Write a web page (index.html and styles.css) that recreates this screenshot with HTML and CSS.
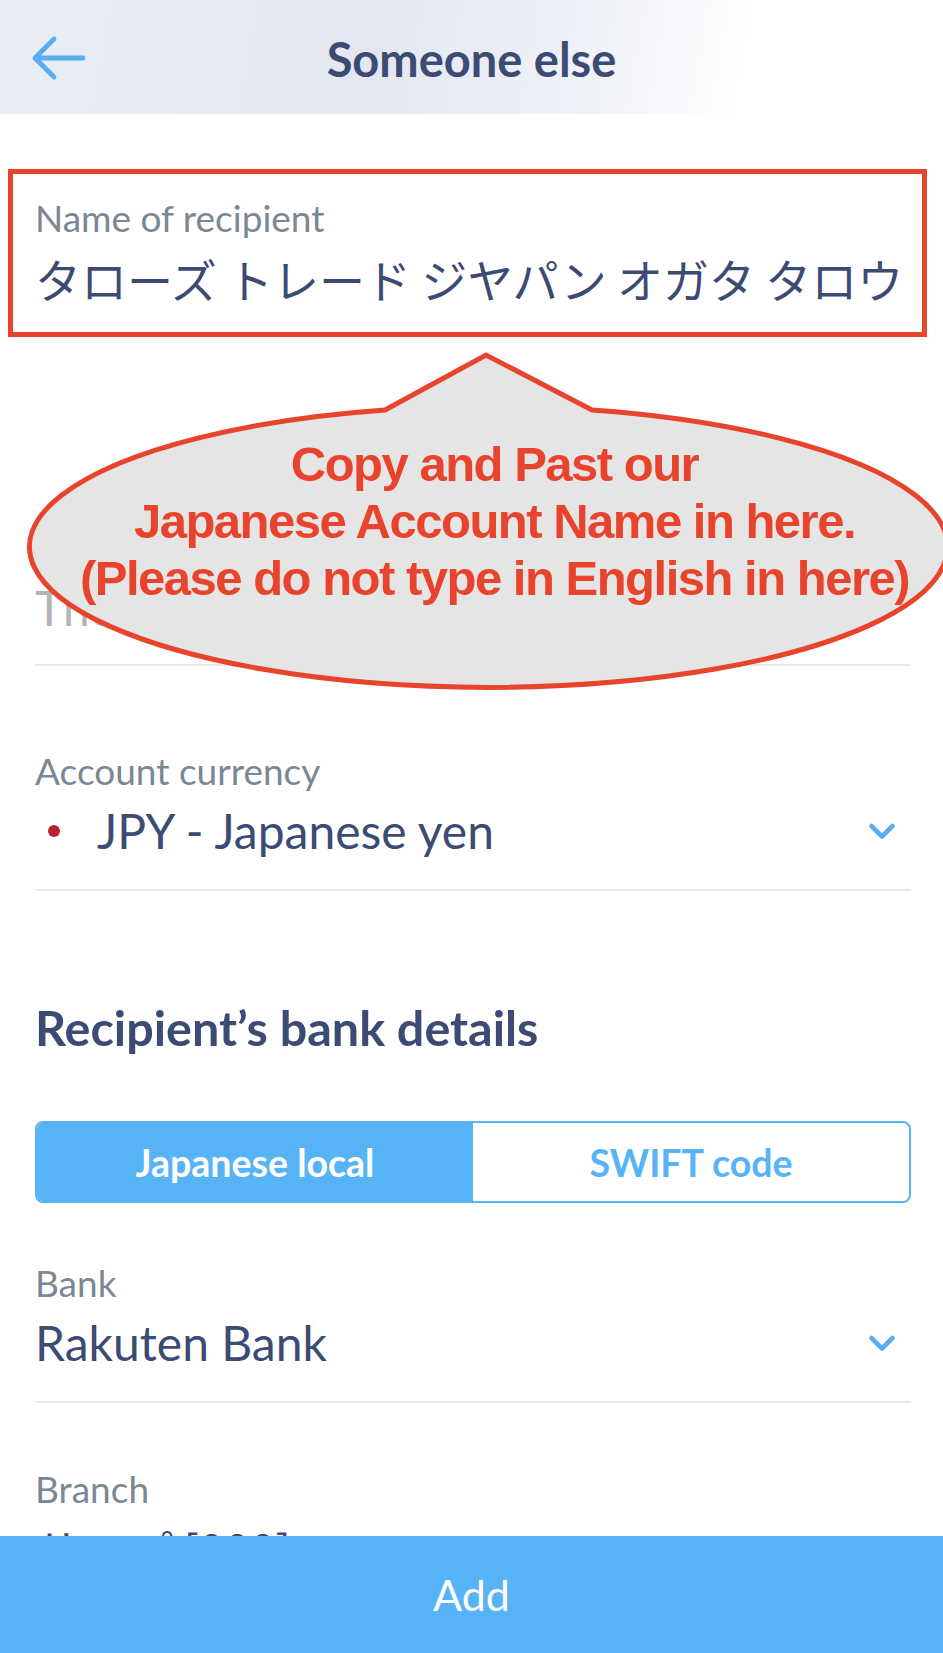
FILE: index.html
```html
<!DOCTYPE html>
<html lang="en">
  <head>
    <meta charset="UTF-8" />
    <meta name="viewport" content="width=device-width, initial-scale=1.0" />
    <title>Someone else</title>
    <link rel="stylesheet" href="styles.css">
  </head>
  <body>
    <div class="screen">
      <header class="topbar">
        <a href="#" class="back">
          <svg width="56" height="46" viewBox="0 0 56 46">
            <path d="M52 23 H4 M23 4 L4 23 L23 42" fill="none" stroke="#5aaef0" stroke-width="4.8" stroke-linecap="round" stroke-linejoin="round" />
          </svg>
        </a>
        <h1>Someone else</h1>
      </header>

      <main class="form">
        <div class="field field-marked">
          <div class="field-label">Name of recipient</div>
          <div class="field-value jp">タローズ トレード ジヤパン オガタ タロウ</div>
        </div>

        <div class="field field-hidden">
          <div class="field-label">Nickname (optional)</div>
          <div class="field-value placeholder">The name you will see</div>
        </div>

        <div class="field field-currency">
          <div class="field-label">Account currency</div>
          <div class="field-value">
            <span class="dot"></span>
            <span class="grow">JPY - Japanese yen</span>
            <svg class="chevron" width="28" height="19" viewBox="0 0 28 19">
              <path d="M3.5 4 L14 14.5 L24.5 4" fill="none" stroke="#5aaef0" stroke-width="4.6" stroke-linecap="round" stroke-linejoin="round" />
            </svg>
          </div>
        </div>

        <h2 class="section-title">Recipient’s bank details</h2>

        <div class="tabs">
          <span class="tab active">Japanese local</span>
          <span class="tab">SWIFT code</span>
        </div>

        <div class="field field-bank">
          <div class="field-label">Bank</div>
          <div class="field-value">
            <span class="grow">Rakuten Bank</span>
            <svg class="chevron" width="28" height="19" viewBox="0 0 28 19">
              <path d="M3.5 4 L14 14.5 L24.5 4" fill="none" stroke="#5aaef0" stroke-width="4.6" stroke-linecap="round" stroke-linejoin="round" />
            </svg>
          </div>
        </div>

        <div class="field field-branch">
          <div class="field-label">Branch</div>
          <div class="field-value jp">サップ [000]</div>
        </div>
      </main>

      <button class="add-btn">Add</button>

      <!-- annotation bubble over the form -->
      <div class="callout">
        <svg class="callout-shape" width="943" height="360" viewBox="0 0 943 360">
          <path d="M385 70 L486 15 L592 70 A459 140.5 0 1 1 385 70 Z" fill="#e5e5e5" stroke="#e8432c" stroke-width="5" stroke-linejoin="miter" />
        </svg>
        <div class="callout-text">
          Copy and Past our<br>
          Japanese Account Name in here.<br>
          (Please do not type in English in here)
        </div>
      </div>
    </div>
  </body>
</html>
```

FILE: styles.css
```css
body {
  margin: 0;
  padding: 0;
  font-family: Lato, "Noto Sans CJK JP", sans-serif;
  background: #fff;
}
.screen {
  position: relative;
  width: 943px;
  height: 1653px;
  display: flex;
  flex-direction: column;
  overflow: hidden;
  background: #fff;
}
.topbar {
  flex: none;
  height: 114px;
  display: grid;
  grid-template-columns: 1fr auto 1fr;
  align-items: center;
  background: linear-gradient(100deg, #e9edf5 0%, #e2e7f1 40%, #f2f4f9 66%, #ffffff 78%);
}
.back {
  display: flex;
  padding-left: 31px;
  padding-top: 2px;
}
.topbar h1 {
  margin: 0;
  padding-top: 4px;
  font-size: 47px;
  font-weight: 700;
  color: #3c4b73;
}
.form {
  flex: 1;
  overflow: hidden;
  padding: 0 32px 0 35px;
}
.field {
  border-bottom: 2px solid #e6e7ec;
  padding-bottom: 20px;
}
.field-label {
  font-size: 37px;
  line-height: 44px;
  color: #7b8794;
}
.field-value {
  display: flex;
  align-items: center;
  font-size: 48px;
  line-height: 76px;
  color: #3c4b73;
  white-space: nowrap;
}
.field-value.jp {
  font-family: "Noto Sans CJK JP", sans-serif;
  font-size: 46px;
}
.field-value.placeholder {
  color: #b4b4b4;
}
.grow {
  flex: 1;
}
.chevron {
  margin-right: 15px;
}
.dot {
  width: 12px;
  height: 12px;
  border-radius: 50%;
  background: #b52331;
  margin: 0 37px 0 13px;
}
.field-marked {
  margin: 55px -16px 0 -27px;
  border: 5px solid #e8432c;
  padding: 22px 0 16px 22px;
}
.field-hidden {
  margin-top: 189px;
  padding-bottom: 18px;
}
.field-currency {
  margin-top: 83px;
}
.section-title {
  margin: 108px 0 0;
  font-size: 48.5px;
  line-height: 56px;
  font-weight: 700;
  color: #3c4b73;
}
.tabs {
  margin-top: 66px;
  height: 82px;
  box-sizing: border-box;
  display: grid;
  grid-template-columns: 1fr 1fr;
  border: 2px solid #56b4f6;
  border-radius: 8px;
  overflow: hidden;
}
.tab {
  display: flex;
  align-items: center;
  justify-content: center;
  font-size: 37.5px;
  font-weight: 700;
  color: #56b4f6;
}
.tab.active {
  background: #56b4f6;
  color: #fff;
}
.field-bank {
  margin-top: 58px;
}
.field-branch {
  margin-top: 64px;
  border-bottom: 0;
}
.add-btn {
  flex: none;
  height: 117px;
  border: 0;
  padding: 0;
  background: #56b4f6;
  color: #fff;
  font-family: Lato, sans-serif;
  font-size: 43px;
}
.callout {
  position: absolute;
  left: 0;
  top: 340px;
  width: 943px;
  height: 360px;
}
.callout-shape {
  position: absolute;
  left: 0;
  top: 0;
}
.callout-text {
  position: relative;
  padding: 96px 0 0 46px;
  text-align: center;
  font-family: "Liberation Sans", Arial, sans-serif;
  font-weight: 700;
  font-size: 49px;
  line-height: 57px;
  letter-spacing: -1.5px;
  color: #e8432c;
}
```
